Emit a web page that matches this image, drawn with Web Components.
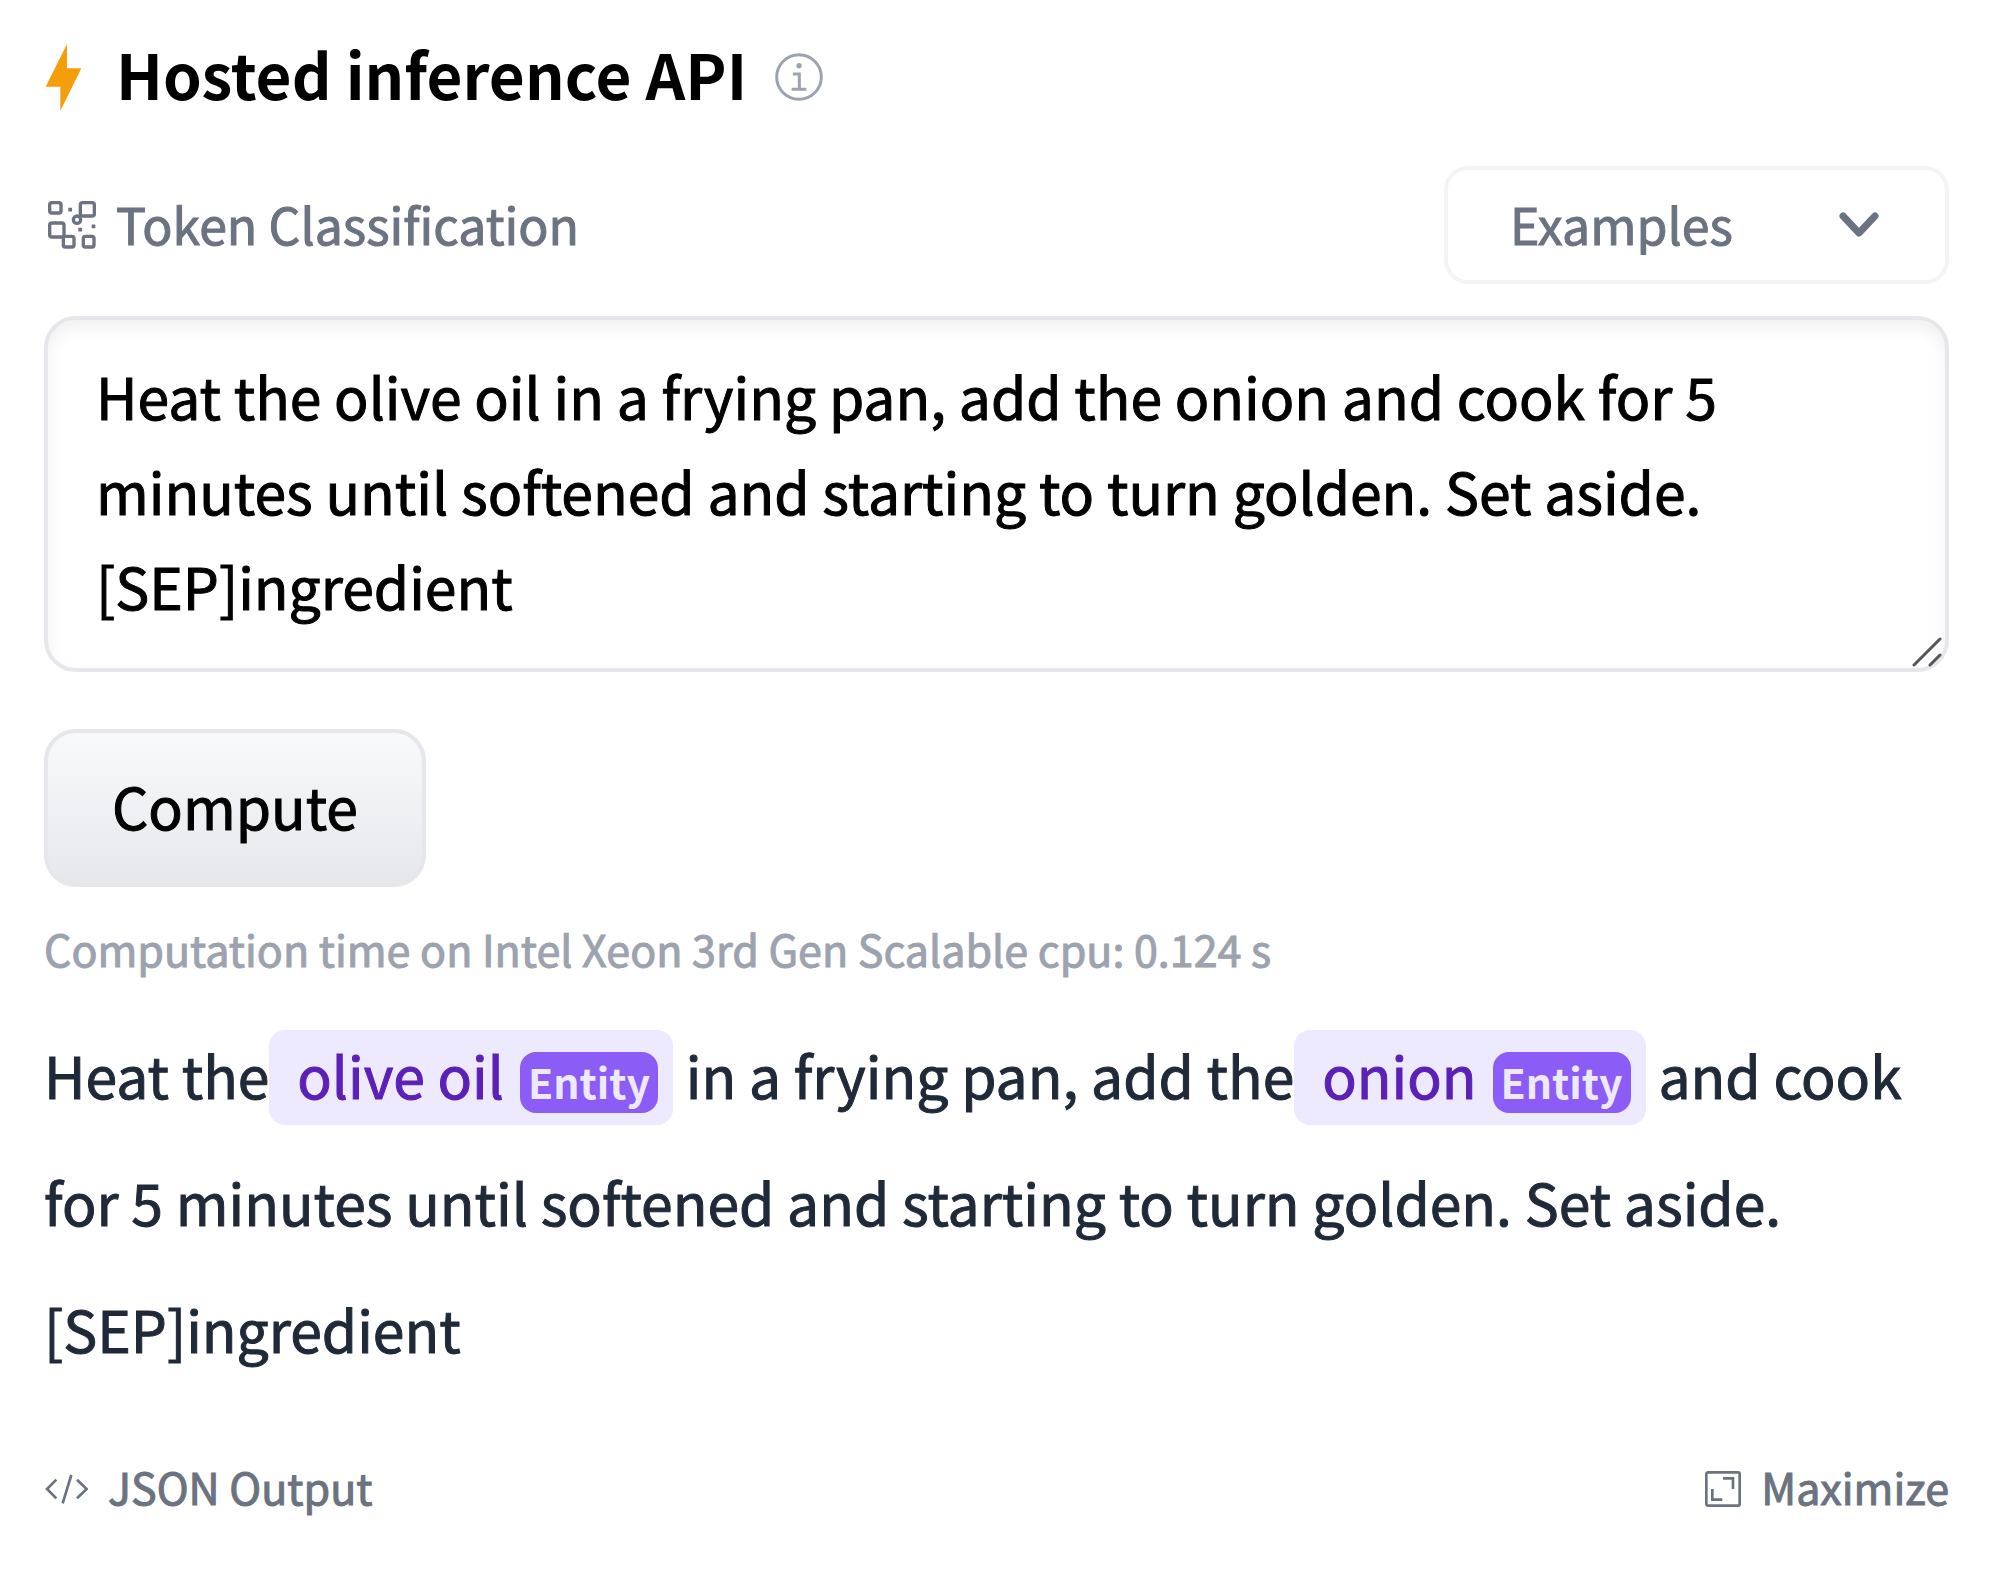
<!DOCTYPE html>
<html lang="en">
<head>
<meta charset="utf-8">
<title>Hosted inference API</title>
<style>
  body {
    margin: 0;
    background: #fff;
    color: #000;
    font-family: "Noto Sans CJK SC", "Noto Sans CJK JP", "Noto Sans", sans-serif;
    -webkit-text-stroke-width: 1px;
  }
</style>
</head>
<body>
<inference-widget>
  <widget-header slot="header">Hosted inference API</widget-header>
  <task-bar slot="task">Token Classification</task-bar>
  <prompt-box slot="input" value="Heat the olive oil in a frying pan, add the onion and cook for 5 minutes until softened and starting to turn golden. Set aside. [SEP]ingredient"></prompt-box>
  <compute-button slot="input">Compute</compute-button>
  <span slot="time">Computation time on Intel Xeon 3rd Gen Scalable cpu: 0.124 s</span>
  <token-output slot="output"><span>Heat the</span><entity-chip label="Entity">olive oil</entity-chip><span> in a frying pan, add the</span><entity-chip label="Entity">onion</entity-chip><span> and cook</span> <span>for 5 minutes until softened and starting to turn golden. Set aside.</span> <span>[SEP]ingredient</span></token-output>
  <widget-footer slot="footer"></widget-footer>
</inference-widget>

<script>
const define = (name, html, setup) => {
  const template = document.createElement('template');
  template.innerHTML = html;
  customElements.define(name, class extends HTMLElement {
    constructor() {
      super();
      this.attachShadow({ mode: 'open' }).append(template.content.cloneNode(true));
    }
    connectedCallback() {
      if (setup) setup(this, this.shadowRoot);
    }
  });
};

define('inference-widget', `
  <style>
    :host { display: flex; flex-direction: column; padding: 33px 51px 60px 44px; }
    .task { margin-top: 45px; }
    .form { display: flex; flex-direction: column; align-items: flex-start; gap: 57px; margin-top: 32px; }
    .time { margin: 33px 0 0; font-size: 43px; line-height: 56px; color: #9ca3af; }
    .output { margin-top: 35px; }
    .footer { margin-top: 66px; }
  </style>
  <slot name="header"></slot>
  <div class="task"><slot name="task"></slot></div>
  <form class="form" onsubmit="return false"><slot name="input"></slot></form>
  <p class="time"><slot name="time"></slot></p>
  <div class="output"><slot name="output"></slot></div>
  <div class="footer"><slot name="footer"></slot></div>
`);

define('widget-header', `
  <style>
    :host { display: flex; align-items: center; padding-left: 1px; -webkit-text-stroke-width: 0; }
    svg { display: block; flex: none; }
    h1 { margin: 0 28px 0 35px; padding-bottom: 8px; font-size: 62px; line-height: 80px; font-weight: 600; }
  </style>
  <svg width="36" height="67" viewBox="0 0 108 201" fill="#f59e0b" aria-hidden="true"><path d="M66 0V73H109L46 201V128H2Z"/></svg>
  <h1><slot></slot></h1>
  <svg width="48" height="48" viewBox="0 0 144 144" fill="none" stroke="#9ca3af" stroke-width="9" aria-hidden="true">
    <circle cx="72" cy="72" r="67"/><path d="M54 63H73V109M50 109H94"/><circle cx="72" cy="38" r="8" fill="#9ca3af" stroke="none"/>
  </svg>
`);

define('task-bar', `
  <style>
    :host { display: flex; align-items: center; justify-content: space-between; color: #6b7280; font-size: 50px; line-height: 64px; }
    .name { display: flex; align-items: center; gap: 20px; padding-left: 4px; }
    .name span { padding-bottom: 4px; }
    svg { display: block; flex: none; }
    .pick { display: grid; align-items: center; }
    .pick > * { grid-area: 1 / 1; }
    .pick svg { justify-self: end; margin-right: 70px; pointer-events: none; }
    select {
      appearance: none; box-sizing: border-box; width: 505px; height: 118px; margin: 0; padding: 0 120px 4px 62px;
      border: 4px solid #f3f4f6; border-radius: 24px; background: #fff; color: inherit; font: inherit;
    }
  </style>
  <div class="name">
    <svg width="48" height="48" viewBox="0 0 144 144" fill="none" stroke="#6b7280" stroke-width="10" aria-hidden="true">
      <rect x="5" y="5" width="34" height="31" rx="7"/>
      <rect x="97" y="5" width="42" height="40" rx="7"/>
      <circle cx="87" cy="56" r="11"/>
      <rect x="5" y="66" width="43" height="42" rx="7"/>
      <rect x="46" y="106" width="32" height="32" rx="6"/>
      <rect x="106" y="106" width="32" height="32" rx="6"/>
      <path stroke-width="11" d="M61 26H72M131 76H142M91 86H102"/>
    </svg>
    <span><slot></slot></span>
  </div>
  <div class="pick">
    <select aria-label="Examples"><option>Examples</option></select>
    <svg width="40" height="26" viewBox="0 0 40 26" fill="none" stroke="#6b7280" stroke-width="7" stroke-linecap="round" stroke-linejoin="round" aria-hidden="true"><path d="M4 4L20 21L36 4"/></svg>
  </div>
`);

define('prompt-box', `
  <style>
    :host { display: grid; align-self: stretch; }
    textarea, svg { grid-area: 1 / 1; }
    textarea {
      display: block; box-sizing: border-box; width: 100%; margin: 0; padding: 28px 48px 35px;
      border: 4px solid #e5e7eb; border-radius: 32px; background: #fff; box-shadow: inset 0 8px 16px rgba(0, 0, 0, 0.06);
      color: #000; font-family: inherit; font-size: 57px; line-height: 95px; resize: none; overflow: hidden; outline: none;
    }
    svg { place-self: end; margin: 0 7px 5px 0; pointer-events: none; }
  </style>
  <textarea rows="3" aria-label="Input text" spellcheck="false"></textarea>
  <svg width="30" height="30" viewBox="0 0 30 30" fill="none" stroke="#555" stroke-width="3" stroke-linecap="round" aria-hidden="true"><path d="M2 28L28 2M18 28L28 18"/></svg>
`, (host, root) => { root.querySelector('textarea').value = host.getAttribute('value'); });

define('compute-button', `
  <style>
    :host { display: block; }
    button {
      display: block; margin: 0; padding: 27px 64px 33px; border: 4px solid #e5e7eb; border-radius: 32px;
      background: linear-gradient(#f9fafb, #e5e7eb) border-box; color: #000; font-family: inherit; font-size: 57px; line-height: 90px;
    }
  </style>
  <button type="submit"><slot></slot></button>
`);

define('token-output', `
  <style>
    :host { display: block; font-size: 57px; line-height: 127px; color: #1f2937; }
  </style>
  <slot></slot>
`);

define('entity-chip', `
  <style>
    :host {
      display: inline-flex; align-items: baseline; gap: 16px; padding: 0 15px 6px 28px;
      border-radius: 16px; background: #ede9fe; color: #5b21b6; line-height: 89px;
    }
    .label {
      padding: 3px 8px 5px; border-radius: 16px; background: #8b5cf6; color: #ede9fe;
      font-size: 41px; line-height: 53px; font-weight: 600; -webkit-text-stroke-width: 0;
    }
  </style>
  <span><slot></slot></span><span class="label"></span>
`, (host, root) => { root.querySelector('.label').textContent = host.getAttribute('label'); });

define('widget-footer', `
  <style>
    :host { display: flex; justify-content: space-between; color: #6b7280; }
    button {
      display: flex; align-items: center; gap: 20px; margin: 0; padding: 0; border: 0; background: none;
      color: inherit; font-family: inherit; font-size: 43px; line-height: 56px;
    }
    svg { display: block; flex: none; }
    span { padding-bottom: 6px; }
  </style>
  <button type="button">
    <svg width="44" height="30" viewBox="-3 0 132 90" fill="none" stroke="#6b7280" stroke-width="8" aria-hidden="true"><path d="M34 17L6 45L34 73M79 3L53 88M96 17L125 45L96 73"/></svg>
    <span>JSON Output</span>
  </button>
  <button type="button">
    <svg width="36" height="36" viewBox="0 0 108 108" fill="none" stroke="#6b7280" stroke-width="8" aria-hidden="true"><rect x="4" y="4" width="100" height="100" rx="5"/><path d="M54 22H84V54M22 54V86H52"/></svg>
    <span>Maximize</span>
  </button>
`);
</script>
</body>
</html>
